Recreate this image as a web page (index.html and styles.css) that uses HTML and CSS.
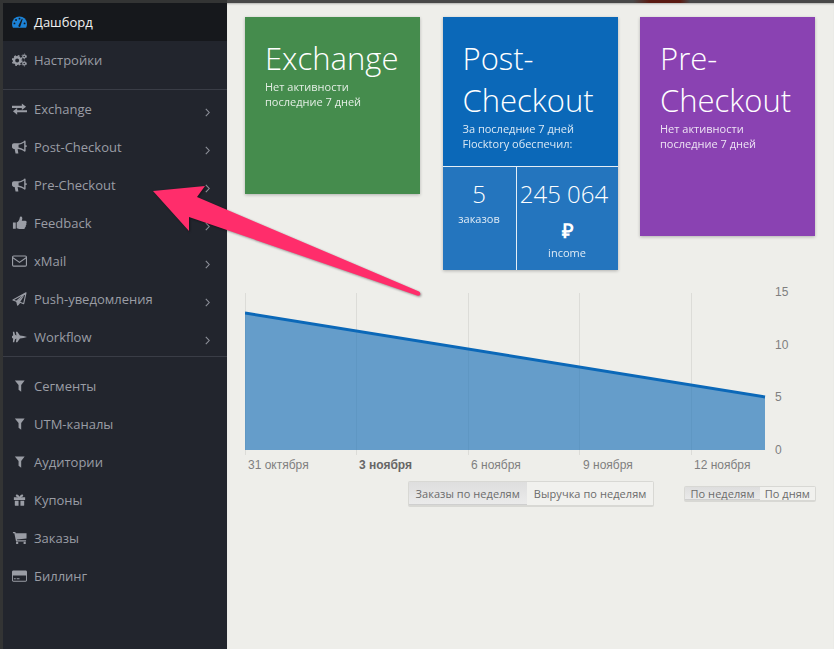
FILE: index.html
```html
<!DOCTYPE html>
<html lang="ru">
<head>
  <meta charset="UTF-8">
  <title>Дашборд</title>
  <link rel="stylesheet" href="styles.css">
</head>
<body>
  <div class="backdrop"></div>
  <div class="app">
    <nav class="sidebar">
      <ul class="menu">
        <li class="menu-item active">
          <svg class="icon" viewBox="0 0 16 12"><path fill="#1c82d6" d="M8 0a8 8 0 0 0-8 8c0 1.500.4 2.900 1 4h14c.6-1.100 1-2.500 1-4a8 8 0 0 0-8-8z"/><path fill="#16181c" d="M7 9.500 10.500 2.500l.9.4L9 10.200a1.100 1.100 0 1 1-2-.7z"/><circle fill="#16181c" cx="2.600" cy="7.500" r="1"/><circle fill="#16181c" cx="4.300" cy="3.900" r="1"/><circle fill="#16181c" cx="8" cy="2.400" r="1"/><circle fill="#16181c" cx="13.400" cy="7.500" r="1"/></svg>
          <span>Дашборд</span>
        </li>
        <li class="menu-item">
          <svg class="icon" viewBox="0 0 16 13"><circle cx="5.500" cy="7" r="3.400" fill="none" stroke="currentColor" stroke-width="2.600"/><circle cx="5.500" cy="7" r="5" fill="none" stroke="currentColor" stroke-width="1.600" stroke-dasharray="2 1.930"/><circle cx="13" cy="2.700" r="1.500" fill="none" stroke="currentColor" stroke-width="1.300"/><circle cx="13" cy="2.700" r="2.500" fill="none" stroke="currentColor" stroke-width="1" stroke-dasharray="1.200 1.420"/><circle cx="13" cy="10.300" r="1.500" fill="none" stroke="currentColor" stroke-width="1.300"/><circle cx="13" cy="10.300" r="2.500" fill="none" stroke="currentColor" stroke-width="1" stroke-dasharray="1.200 1.420"/></svg>
          <span>Настройки</span>
        </li>
      </ul>
      <ul class="menu menu-ruled">
        <li class="menu-item">
          <svg class="icon" viewBox="0 0 16 12"><path fill="currentColor" d="M0 2.500h10.500V0L15 3.500 10.500 7V4.800H0zM16 7.200v2.300H5.500V12L1 8.500 5.500 5v2.200z"/></svg>
          <span>Exchange</span>
          <svg class="chevron" viewBox="0 0 5 9"><path d="M.8.8 4.200 4.500.8 8.200"/></svg>
        </li>
        <li class="menu-item">
          <svg class="icon" viewBox="0 0 16 14"><path fill="currentColor" fill-rule="evenodd" d="M14.500 5V1c0-.5-.4-1-1-1-2 2-4 3-7 3H2C1 3 0 4 0 5v2c0 1 1 2 2 2h.8l1 5h3L6 9c2.500.2 5 1 7.500 3 .6 0 1-.5 1-1V7c.8 0 1.500-.4 1.500-1s-.7-1-1.500-1zM13 9.800c-2-1.300-4-2-6-2.300V4.500c2-.3 4-1 6-2.300z"/></svg>
          <span>Post-Checkout</span>
          <svg class="chevron" viewBox="0 0 5 9"><path d="M.8.8 4.200 4.500.8 8.200"/></svg>
        </li>
        <li class="menu-item">
          <svg class="icon" viewBox="0 0 16 14"><path fill="currentColor" fill-rule="evenodd" d="M14.500 5V1c0-.5-.4-1-1-1-2 2-4 3-7 3H2C1 3 0 4 0 5v2c0 1 1 2 2 2h.8l1 5h3L6 9c2.500.2 5 1 7.500 3 .6 0 1-.5 1-1V7c.8 0 1.500-.4 1.500-1s-.7-1-1.500-1zM13 9.800c-2-1.300-4-2-6-2.300V4.500c2-.3 4-1 6-2.300z"/></svg>
          <span>Pre-Checkout</span>
          <svg class="chevron" viewBox="0 0 5 9"><path d="M.8.8 4.200 4.500.8 8.200"/></svg>
        </li>
        <li class="menu-item">
          <svg class="icon" viewBox="0 0 16 14"><path fill="currentColor" d="M1 6.500h3V13H1zM5 6.500C7 5.500 8 3.500 8.300 1c.2-1.300 2.700-1.200 2.700 1 0 1-.5 2.500-.5 2.500H14c1.800 0 2 2 1.200 2.800.5.900.2 1.900-.5 2.400.2 1-.2 1.700-.9 2.100 0 1-.6 1.700-1.800 1.700H9c-2 0-2.500-1-4-1z"/></svg>
          <span>Feedback</span>
          <svg class="chevron" viewBox="0 0 5 9"><path d="M.8.8 4.200 4.500.8 8.200"/></svg>
        </li>
        <li class="menu-item">
          <svg class="icon" viewBox="0 0 16 12"><rect x=".6" y=".6" width="14.800" height="10.800" rx="1.200" fill="none" stroke="currentColor" stroke-width="1.200"/><path d="M1 2.500 8 7.500 15 2.500" fill="none" stroke="currentColor" stroke-width="1.200"/></svg>
          <span>xMail</span>
          <svg class="chevron" viewBox="0 0 5 9"><path d="M.8.8 4.200 4.500.8 8.200"/></svg>
        </li>
        <li class="menu-item">
          <svg class="icon" viewBox="0 0 16 15"><path fill="none" stroke="currentColor" stroke-width="1.200" stroke-linejoin="round" d="M15 .8 1 8.500l3.500 1.500L15 .8 12.500 12.500 8.500 11 6 14l-1-4"/><path fill="currentColor" d="M5 10 6 14l2.500-3L13 4z"/></svg>
          <span>Push-уведомления</span>
          <svg class="chevron" viewBox="0 0 5 9"><path d="M.8.8 4.200 4.500.8 8.200"/></svg>
        </li>
        <li class="menu-item">
          <svg class="icon" viewBox="0 0 17 12"><path fill="currentColor" d="M1 0h1.500l1 3.500L5 4.200 4.500 0H6l3 4.300 4 .7 4 1-4 1-4 .7L6 12H4.500L5 7.800l-1.500.7L2.500 12H1l.3-4.300L0 7V5l1.300-.7z"/></svg>
          <span>Workflow</span>
          <svg class="chevron" viewBox="0 0 5 9"><path d="M.8.8 4.200 4.500.8 8.200"/></svg>
        </li>
      </ul>
      <ul class="menu menu-ruled menu-spaced">
        <li class="menu-item">
          <svg class="icon" viewBox="0 0 16 12"><path fill="currentColor" d="M3 0h10.500L9.800 5v7L7 10V5z"/></svg>
          <span>Сегменты</span>
        </li>
        <li class="menu-item">
          <svg class="icon" viewBox="0 0 16 12"><path fill="currentColor" d="M3 0h10.500L9.800 5v7L7 10V5z"/></svg>
          <span>UTM-каналы</span>
        </li>
        <li class="menu-item">
          <svg class="icon" viewBox="0 0 16 12"><path fill="currentColor" d="M3 0h10.500L9.800 5v7L7 10V5z"/></svg>
          <span>Аудитории</span>
        </li>
        <li class="menu-item">
          <svg class="icon" viewBox="0 0 16 12"><path fill="currentColor" fill-rule="evenodd" d="M2 3h4.800C5.500 3 4 2.500 4 1.300 4 .5 4.600 0 5.300 0 6.500 0 7.500 1.200 8 2.500 8.500 1.200 9.500 0 10.700 0c.7 0 1.300.5 1.300 1.300C12 2.500 10.500 3 9.200 3H14v3H2zM3 6.800h4V12H3.500a.5.500 0 0 1-.5-.5zM9 6.800h4v4.700a.5.500 0 0 1-.5.5H9z"/></svg>
          <span>Купоны</span>
        </li>
        <li class="menu-item">
          <svg class="icon" viewBox="0 0 16 13"><path fill="currentColor" d="M1 0h2.500L4 1.500h11.500V7L5.300 8l.2 1h9.500v1.200H4.300L2.500 1.300H1z"/><circle fill="currentColor" cx="5.500" cy="11.700" r="1.300"/><circle fill="currentColor" cx="13.500" cy="11.700" r="1.300"/></svg>
          <span>Заказы</span>
        </li>
        <li class="menu-item">
          <svg class="icon" viewBox="0 0 16 12"><path fill="currentColor" fill-rule="evenodd" d="M1.500 0h13C15.300 0 16 .7 16 1.500v9c0 .8-.7 1.500-1.500 1.500h-13C.7 12 0 11.300 0 10.500v-9C0 .7.700 0 1.500 0zM1 5.500v5c0 .3.200.5.500.5h13c.3 0 .5-.2.500-.5v-5zM2 8.500h2v1H2zM5 8.500h3v1H5z"/></svg>
          <span>Биллинг</span>
        </li>
      </ul>
    </nav>

    <main class="content">
      <section class="cards">
        <article class="card card-green">
          <div class="card-body card-body-empty">
            <h2 class="card-title">Exchange</h2>
            <p class="card-note">Нет активности<br>последние 7 дней</p>
          </div>
        </article>
        <article class="card card-blue">
          <div class="card-body">
            <h2 class="card-title">Post-Checkout</h2>
            <p class="card-note">За последние 7 дней<br>Flocktory обеспечил:</p>
          </div>
          <div class="stats">
            <div class="stat">
              <div class="stat-value">5</div>
              <div class="stat-label">заказов</div>
            </div>
            <div class="stat">
              <div class="stat-value stat-value-wide">245 064</div>
              <div class="stat-currency">₽</div>
              <div class="stat-label">income</div>
            </div>
          </div>
        </article>
        <article class="card card-purple">
          <div class="card-body card-body-empty">
            <h2 class="card-title">Pre-Checkout</h2>
            <p class="card-note">Нет активности<br>последние 7 дней</p>
          </div>
        </article>
      </section>

      <svg class="chart" viewBox="0 0 570 190" width="570" height="190">
        <g class="chart-grid">
          <path d="M.5 8v162M111.500 8v162M223.500 8v162M334.500 8v162M446.500 8v162"/>
        </g>
        <path class="chart-area" d="M0 28 520 112V165H0z"/>
        <path class="chart-line" d="M0 28 520 112"/>
        <g class="chart-labels">
          <text x="3" y="184">31 октября</text>
          <text class="chart-label-bold" x="114" y="184">3 ноября</text>
          <text x="226" y="184">6 ноября</text>
          <text x="338" y="184">9 ноября</text>
          <text x="449" y="184">12 ноября</text>
          <text x="530" y="11">15</text>
          <text x="530" y="64">10</text>
          <text x="530" y="116">5</text>
          <text x="530" y="169">0</text>
        </g>
      </svg>

      <div class="chart-controls">
        <div class="btn-group">
          <button class="btn btn-on">Заказы по неделям</button>
          <button class="btn">Выручка по неделям</button>
        </div>
        <div class="btn-group btn-group-small">
          <button class="btn btn-on">По неделям</button>
          <button class="btn">По дням</button>
        </div>
      </div>
    </main>
  </div>

  <!-- annotation drawn over the screenshot -->
  <svg class="arrow" viewBox="0 0 834 649" width="834" height="649">
    <path d="M153 191 205 186 197 197 419 291.500Q421 293 420 295 419 296 417 295.500L189 217 189 231z"/>
  </svg>
</body>
</html>
```

FILE: styles.css
```css
* {
  box-sizing: border-box;
}

html, body {
  height: 100%;
}

body {
  margin: 0;
  position: relative;
  display: flex;
  flex-direction: column;
  overflow: hidden;
  background-color: #333434;
  font-family: "Open Sans", sans-serif;
}

.backdrop {
  height: 3px;
  flex: none;
  background: linear-gradient(to right, #333434 227px, #484848 227px, #484848 633px, #5a1a10 650px, #5a1a10 680px, #484848 690px);
}

.app {
  flex: 1;
  display: flex;
  padding-left: 3px;
  min-height: 0;
}

/* sidebar */
.sidebar {
  width: 224px;
  flex: none;
  background-color: #22252d;
}

.menu {
  list-style: none;
  margin: 0;
  padding: 0;
}

.menu-ruled {
  border-top: 1px solid #3a3d46;
  margin-top: 10px;
}

.menu-spaced {
  margin-top: 0;
  padding-top: 10px;
}

.menu-item {
  height: 38px;
  display: flex;
  align-items: center;
  padding: 0 17px 0 9px;
  color: #9a9da5;
  font-size: 13px;
}

.menu-item.active {
  background-color: #16181c;
  color: #f2f2f2;
}

.icon {
  width: 15px;
  height: 14px;
  flex: none;
  margin-right: 7px;
}

.chevron {
  width: 5px;
  height: 9px;
  margin-left: auto;
  margin-top: 6px;
  fill: none;
  stroke: #8d9099;
  stroke-width: 1.100;
}

/* main area */
.content {
  flex: 1;
  min-width: 0;
  padding: 14px 18px 0;
  background-color: #eeeeea;
  box-shadow: inset 0 2px 2px -1px rgba(0, 0, 0, 0.25);
}

.cards {
  width: 570px;
  display: flex;
  justify-content: space-between;
  align-items: flex-start;
}

.card {
  width: 175px;
  color: #fff;
  box-shadow: 0 1px 3px rgba(0, 0, 0, 0.25);
}

.card-green {
  background-color: #458c4d;
}

.card-blue {
  background-color: #0b68b8;
}

.card-purple {
  background-color: #8a42b2;
}

.card-body {
  padding: 20px 20px 15px;
}

.card-body-empty {
  padding-bottom: 85px;
}

.card-title {
  margin: 0;
  font-size: 31px;
  font-weight: 300;
  line-height: 42px;
}

.card-note {
  margin: 0;
  font-size: 11px;
  line-height: 15px;
  opacity: 0.85;
}

.stats {
  display: flex;
  height: 104px;
  border-top: 1px solid #e4eef6;
  background-color: #2475be;
  text-align: center;
}

.stat {
  padding-top: 10px;
}

.stat:first-child {
  width: 74px;
  border-right: 1px solid #e4eef6;
}

.stat:last-child {
  flex: 1;
}

.stat-value {
  font-size: 24px;
  font-weight: 300;
  line-height: 33px;
}

.stat-value-wide {
  margin-right: 6px;
}

.stat-label {
  font-size: 11px;
  line-height: 15px;
  margin-top: 1px;
  opacity: 0.85;
}

.stat-currency {
  font-size: 20px;
  font-weight: 700;
  line-height: 25px;
  margin: 8px 0 2px;
  padding-left: 1px;
}

/* chart */
.chart {
  display: block;
  margin-top: 15px;
}

.chart-grid path {
  fill: none;
  stroke: #dcdcd8;
  stroke-width: 1;
}

.chart-area {
  fill: #1b72b8;
  fill-opacity: 0.65;
}

.chart-line {
  fill: none;
  stroke: #0b68b8;
  stroke-width: 3;
}

.chart-labels text {
  font-family: "Liberation Sans", sans-serif;
  font-size: 12px;
  fill: #7f7f7f;
}

.chart-labels .chart-label-bold {
  font-weight: 700;
  fill: #666;
}

.chart-controls {
  width: 571px;
  margin-top: 6px;
  display: flex;
  justify-content: flex-end;
  align-items: center;
  gap: 30px;
}

.btn-group {
  display: flex;
  border: 1px solid #d8d8d4;
  border-bottom-width: 2px;
  border-radius: 2px;
}

.btn {
  margin: 0;
  padding: 0 7px;
  height: 23px;
  border: 0;
  background-color: #f1f1ee;
  color: #6b6b6b;
  font-family: "Open Sans", sans-serif;
  font-size: 11px;
  letter-spacing: 0.06px;
}

.btn-on {
  padding: 0 7px;
  background: linear-gradient(to bottom, #dedede, #ebebeb);
  box-shadow: inset 0 -1px 0 #cfcfcf;
}

.btn-group-small .btn {
  height: 13px;
  line-height: 13px;
  padding: 0 5px;
}

/* annotation */
.arrow {
  position: absolute;
  left: 0;
  top: 0;
  pointer-events: none;
  filter: drop-shadow(1px 1px 1px rgba(0, 0, 0, 0.4));
}

.arrow path {
  fill: #ff2d6b;
}
```
